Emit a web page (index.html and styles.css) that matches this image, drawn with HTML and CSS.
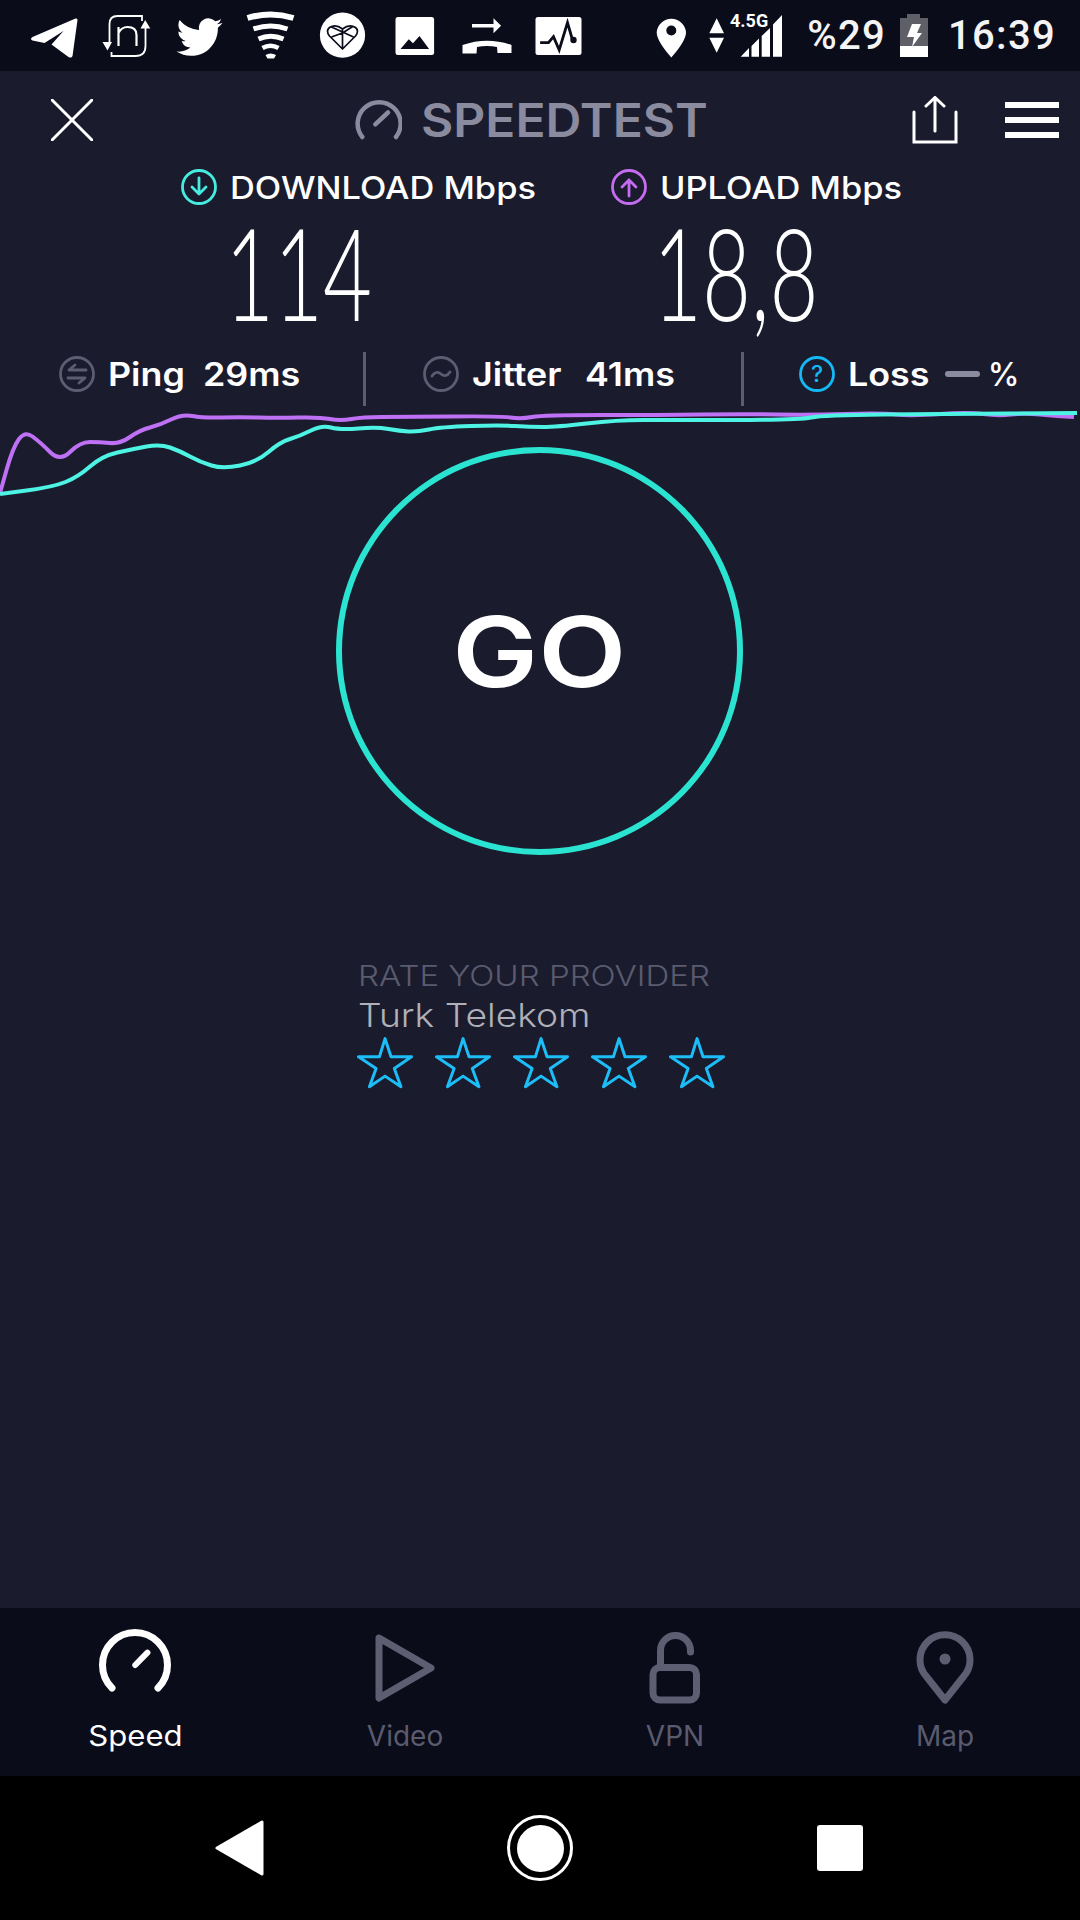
FILE: index.html
```html
<!DOCTYPE html>
<html lang="en">
<head>
<meta charset="utf-8">
<title>Speedtest</title>
<link rel="stylesheet" href="styles.css">
</head>
<body>
<div class="status">
  <div class="status-left">
    <svg class="slot" viewBox="17.5 0 72 71"><path fill="#fff" d="M75 18.6 32 37Q29 39 32 40.6L44 43 63 31 51 44.5 68 57Q71 58.5 72 56L77 20Q77 18 75 18.6Z"/></svg>
    <svg class="slot" viewBox="89.5 0 72 71"><g fill="none" stroke="#fff" stroke-width="1.8"><path d="M109 43V24Q109 16 117 16H141.5V21"/><path d="M145 28V46Q145 56 135 56H111V52"/><path stroke-width="2.2" d="M118 46V27M118 33Q121 27 127 27 136 27 136 35V46"/></g><path fill="#fff" d="M102 42H111.5L107 50.5ZM144.7 20 149.8 28.5H140Z"/></svg>
    <svg class="slot" viewBox="161.5 0 72 71"><path fill="#fff" transform="translate(176 14) scale(1.92)" d="M23.953 4.57a10 10 0 01-2.825.775 4.958 4.958 0 002.163-2.723c-.951.555-2.005.959-3.127 1.184a4.92 4.92 0 00-8.384 4.482C7.69 8.095 4.067 6.13 1.64 3.162a4.822 4.822 0 00-.666 2.475c0 1.71.87 3.213 2.188 4.096a4.904 4.904 0 01-2.228-.616v.06a4.923 4.923 0 003.946 4.827 4.996 4.996 0 01-2.212.085 4.936 4.936 0 004.604 3.417 9.867 9.867 0 01-6.102 2.105c-.39 0-.779-.023-1.17-.067a13.995 13.995 0 007.557 2.209c9.053 0 13.998-7.496 13.998-13.985 0-.21 0-.42-.015-.63A9.935 9.935 0 0024 4.59z"/></svg>
    <svg class="slot" viewBox="233.5 0 72 71"><g fill="none" stroke="#fff"><path stroke-width="6" d="M247 18Q270 11 293 18"/><path stroke-width="5" d="M253 29Q270 23 287 29"/><path stroke-width="5" d="M258 39Q270 33.5 283 39"/><path stroke-width="4.5" d="M262 48Q270 43.5 278 48"/></g><path fill="#fff" d="M265 55Q270 52 275.500 55L273.500 58.500H267Z"/></svg>
    <svg class="slot" viewBox="305.500 0 72 71"><circle cx="342" cy="35.200" r="22.600" fill="#fff"/><path fill="none" stroke="#0a0c1a" stroke-width="1.700" stroke-linejoin="round" d="M342 49 329 36Q325 31 329 27.500 335 23.500 342 29 349 23.500 355 27.500 359 31 355 36ZM331 27 353 37M342 29V49M331 37 342 33 353 26"/></svg>
    <svg class="slot" viewBox="377.500 0 72 71"><rect x="395" y="17" width="38.600" height="38" rx="2.500" fill="#fff"/><path fill="#0a0c1a" d="M400 49 408.300 39.300 412.500 43.300 419 36 428.600 49Z"/></svg>
    <svg class="slot" viewBox="449.500 0 72 71"><path fill="#fff" d="M471.500 24H493V18.300L500.600 25.700 493 33.300V27.500H471.500ZM462 45Q486.500 36.500 511 45V53H497L496.500 47Q486.500 45 476.500 47L476 53.500H462Z"/></svg>
    <svg class="slot" viewBox="521.500 0 72 71"><rect x="535" y="17" width="46" height="38" rx="2.500" fill="#fff"/><path fill="none" stroke="#0a0c1a" stroke-width="2.800" d="M539.600 42.700H548L553 36.700 558.700 50 567 22.700 572 40"/><circle cx="573" cy="40" r="3.200" fill="#0a0c1a"/></svg>
  </div>
  <div class="status-right">
    <svg class="sys-icons" viewBox="650 0 140 71"><path fill="#fff" fill-rule="evenodd" d="M671.300 57.500Q656.700 41 656.700 32.300A14.700 14.700 0 0 1 686 32.300Q686 41 671.300 57.500ZM671.300 35.500A5 5 0 1 0 671.300 25.500 5 5 0 0 0 671.300 35.500Z"/><path fill="#fff" d="M716.700 18.300 724 33.300H709.300ZM709.300 37.700H724L716.700 52.700ZM740.700 56.700H749V48ZM751.500 46V56.700H759V38.500ZM761.700 36V56.700H770V28ZM773 24.500V56.700H782V15Z"/><text class="net" x="730" y="27">4.5G</text></svg>
    <span class="pct">%29</span>
    <svg class="battery" viewBox="0 0 28 43"><path fill="#5f5f68" d="M7 0H20V4H28V32H0V4H7Z"/><path fill="#fff" d="M0 32H28V43H0ZM12 10H21L17 19H22L12 33 14 23H7Z"/></svg>
    <span class="clock">16:39</span>
  </div>
</div>

<main class="main">
  <div class="topbar">
    <svg class="close" viewBox="0 0 42 42"><path d="M1 1 41 41M41 1 1 41"/></svg>
    <svg class="gauge" viewBox="355 96 47 44"><path d="M362.300 135A21.500 21.500 0 1 1 396 135"/><path d="M375.300 122.300 388 110.500"/></svg>
    <span class="brand">SPEEDTEST</span>
    <svg class="share" viewBox="912 96 46 48"><path d="M914 112V142H956V112M935 131V98M926 106 935 97.500 944 106"/></svg>
    <div class="menu"><i></i><i></i><i></i></div>
  </div>

  <div class="labels">
    <div class="label">
      <svg class="ring ring-dl" viewBox="0 0 36 36"><circle cx="18" cy="18" r="16.500"/><path d="M18 9V25M11 18 18 25 25 18"/></svg>
      <span>DOWNLOAD Mbps</span>
    </div>
    <div class="label label-up">
      <svg class="ring ring-ul" viewBox="0 0 36 36"><circle cx="18" cy="18" r="16.500"/><path d="M18 27V11M11 18 18 11 25 18"/></svg>
      <span>UPLOAD Mbps</span>
    </div>
  </div>

  <div class="numbers">
    <span class="num">114</span>
    <span class="num">18,8</span>
  </div>

  <div class="metrics">
    <div class="metric metric-ping">
      <svg class="ring ring-grey" viewBox="0 0 36 36"><circle cx="18" cy="18" r="16.500"/><path d="M27 14H10L16 9M9 22H26L20 27"/></svg>
      <span class="word">Ping</span><span class="word val">29ms</span>
    </div>
    <i class="rule"></i>
    <div class="metric metric-jitter">
      <svg class="ring ring-grey" viewBox="0 0 36 36"><circle cx="18" cy="18" r="16.500"/><path d="M9 20Q13 14 18 18T27 16"/></svg>
      <span class="word">Jitter</span><span class="word val">41ms</span>
    </div>
    <i class="rule"></i>
    <div class="metric metric-loss">
      <svg class="ring ring-blue" viewBox="0 0 36 36"><circle cx="18" cy="18" r="16.500"/><text x="18" y="26" class="q">?</text></svg>
      <span class="word">Loss</span><i class="dash"></i><span class="pc">%</span>
    </div>
  </div>

  <svg class="graph" viewBox="0 406 1080 100">
    <path class="line-ul" d="M0 493L6.500 470Q13 447 19 439Q25 431 32.500 436.500Q40 442 50 452Q60 462 70 452Q80 442 90 442Q100 442 110 443Q120 444 130 437Q140 430 150 427.500Q160 425 171 419.500Q182 414 192.500 416Q203 418 221.500 417.500Q240 417 258.500 417.500Q277 418 298.500 417.500Q320 417 330 419Q340 421 351.500 419Q363 417 381 417Q400 417 450 416.500Q500 416 510.500 417.500Q521 419 532 417Q543 415 601 415Q660 415 701 414.500Q743 414 777 414.500Q812 415 846 414Q881 413 896 414.500Q912 416 940 414Q968 412 983 414Q998 416 1011 414.500Q1024 413 1040 414.500Q1057 416 1074 417"/>
    <path class="line-dl" d="M0 494L26.500 490.500Q53 487 65.500 482Q78 477 90 466.500Q102 456 117.500 452.500Q133 449 146.500 446.500Q160 444 170 447.500Q180 451 190 456.500Q200 462 211.500 465.500Q223 469 240 465.500Q257 462 268.500 452Q280 442 290 439Q300 436 311 430.500Q322 425 331 427.500Q340 430 358.500 428.500Q377 427 388.500 429Q400 431 408.500 431.500Q417 432 429 429.500Q441 427 470.500 426Q500 425 515 426Q530 427 543 427Q556 427 586.500 423.500Q617 420 643 420Q669 420 734 420Q799 420 811 417.500Q823 415 882.500 414.500Q942 414 1009 413.500L1077 413"/>
  </svg>

  <div class="go"><span>GO</span></div>

  <section class="rate">
    <div class="rate-title">RATE YOUR PROVIDER</div>
    <div class="rate-name">Turk Telekom</div>
    <div class="stars">
      <svg class="star" viewBox="-1.500 -1.500 56.300 52"><path d="M26.700 0 32.700 18.300H53.300L36 30 42.700 48.300 26.700 37.700 11 48.300 17.700 30 0 18.300H21Z"/></svg>
      <svg class="star" viewBox="-1.500 -1.500 56.300 52"><path d="M26.700 0 32.700 18.300H53.300L36 30 42.700 48.300 26.700 37.700 11 48.300 17.700 30 0 18.300H21Z"/></svg>
      <svg class="star" viewBox="-1.500 -1.500 56.300 52"><path d="M26.700 0 32.700 18.300H53.300L36 30 42.700 48.300 26.700 37.700 11 48.300 17.700 30 0 18.300H21Z"/></svg>
      <svg class="star" viewBox="-1.500 -1.500 56.300 52"><path d="M26.700 0 32.700 18.300H53.300L36 30 42.700 48.300 26.700 37.700 11 48.300 17.700 30 0 18.300H21Z"/></svg>
      <svg class="star" viewBox="-1.500 -1.500 56.300 52"><path d="M26.700 0 32.700 18.300H53.300L36 30 42.700 48.300 26.700 37.700 11 48.300 17.700 30 0 18.300H21Z"/></svg>
    </div>
  </section>
</main>

<nav class="tabs">
  <div class="tab tab-on">
    <svg class="tab-icon" viewBox="90 1624 90 80"><path d="M112 1688A32.500 32.500 0 1 1 158 1688"/><path stroke-width="6" d="M135.300 1665 147.400 1652.700"/></svg>
    <span>Speed</span>
  </div>
  <div class="tab">
    <svg class="tab-icon" viewBox="360 1624 90 80"><path d="M379 1638 431 1668 379 1698Z"/></svg>
    <span>Video</span>
  </div>
  <div class="tab">
    <svg class="tab-icon" viewBox="630 1624 90 80"><rect x="653" y="1667.500" width="43.500" height="32.500" rx="7"/><path d="M660.500 1667V1650.500A15 15 0 0 1 690.500 1650.500V1652"/></svg>
    <span>VPN</span>
  </div>
  <div class="tab">
    <svg class="tab-icon" viewBox="900 1624 90 80"><path d="M945 1700 926 1676A25 25 0 1 1 964 1676Z"/><circle class="dot" cx="945" cy="1659" r="5.500"/></svg>
    <span>Map</span>
  </div>
</nav>

<div class="sysnav">
  <div class="sys-cell"><svg class="back" viewBox="0 0 50 58"><path d="M47 3V55L2 29Z"/></svg></div>
  <div class="sys-cell"><div class="home"><i></i></div></div>
  <div class="sys-cell"><i class="recent"></i></div>
</div>
</body>
</html>
```

FILE: styles.css
```css
* { box-sizing: border-box; }
html, body { margin: 0; padding: 0; }
body {
  width: 1080px;
  height: 1920px;
  display: flex;
  flex-direction: column;
  background: #1a1c2e;
  color: #fff;
  font-family: Inter, "Liberation Sans", sans-serif;
  overflow: hidden;
}
svg { display: block; flex: none; }
i { display: block; }

/* status bar */
.status {
  height: 71px;
  flex: none;
  display: flex;
  justify-content: space-between;
  background: #0a0c1a;
  font-family: Roboto, sans-serif;
}
.status-left { display: flex; padding-left: 17.5px; }
.slot { width: 72px; height: 71px; }
.status-right { display: flex; align-items: center; padding-right: 24px; }
.sys-icons { width: 140px; height: 71px; margin-right: 17px; }
.net { font-size: 18px; font-weight: 700; fill: #fff; font-family: Roboto, sans-serif; }
.pct, .clock { font-size: 40px; font-weight: 500; line-height: 71px; color: #f4f4f4; letter-spacing: 1.300px; }
.battery { width: 28px; height: 43px; margin: 0 20px 0 14px; }

/* main */
.main { flex: 1; display: flex; flex-direction: column; min-height: 0; }
.topbar { height: 98px; flex: none; display: flex; align-items: center; padding: 0 21px 0 51px; }
.close { width: 42px; height: 42px; fill: none; stroke: #fff; stroke-width: 3; stroke-linecap: round; }
.gauge { width: 47px; height: 44px; margin-left: 262px; fill: none; stroke: #8a8b9e; stroke-width: 4.500; stroke-linecap: round; }
.brand { margin-left: 19px; font-size: 46px; font-weight: 600; line-height: 1; color: #8a8b9e; transform: scaleX(1.080); transform-origin: left center; }
.share { width: 46px; height: 48px; margin-left: auto; fill: none; stroke: #fff; stroke-width: 3; stroke-linecap: round; }
.menu { width: 54px; margin-left: 47px; display: flex; flex-direction: column; gap: 9px; }
.menu i { height: 6px; background: #fff; }

.labels { height: 34px; flex: none; display: flex; padding-left: 181px; margin-top: 1px; }
.label { display: flex; align-items: center; gap: 13px; font-size: 31px; font-weight: 500; line-height: 34px; }
.label span { padding-top: 2px; transform: scaleX(1.110); transform-origin: left center; }
.label-up { margin-left: 105px; }
.ring { width: 36px; height: 36px; fill: none; stroke-width: 2.800; stroke-linecap: round; stroke-linejoin: round; }
.ring-dl { stroke: #45ecdf; }
.ring-ul { stroke: #c56cf0; }
.ring-grey { stroke: #5c5d70; }
.ring-blue { stroke: #14b8f5; }
.q { fill: #14b8f5; stroke: none; font-size: 23px; font-weight: 500; text-anchor: middle; }

.numbers { height: 148px; flex: none; display: flex; padding-left: 225px; padding-bottom: 12px; align-items: center; }
.num {
  width: 440px;
  font-family: Lato, sans-serif;
  font-weight: 300;
  font-size: 128px;
  line-height: 136px;
  transform: scaleX(0.660);
  transform-origin: left center;
}

.metrics { height: 54px; flex: none; display: flex; align-items: center; font-size: 32px; font-weight: 600; }
.metric { display: flex; align-items: center; padding-bottom: 10px; }
.metric > svg { margin-right: 13px; }
.word { transform: scaleX(1.120); transform-origin: left center; }
.metric-ping { width: 363px; padding-left: 59px; }
.metric-ping .val { margin-left: 26px; }
.metric-jitter { width: 375px; padding-left: 57px; }
.metric-jitter .val { margin-left: 33px; }
.metric-loss { padding-left: 55px; }
.rule { width: 3px; height: 54px; background: #5c5d70; flex: none; }
.dash { width: 35px; height: 6px; border-radius: 3px; background: #8a8b9e; margin: 0 8px 0 24px; }
.pc { font-weight: 500; }

.graph { width: 1080px; height: 100px; flex: none; margin-bottom: -59px; }
.line-ul, .line-dl { fill: none; stroke-width: 4; stroke-linejoin: round; }
.line-ul { stroke: #bf71f5; }
.line-dl { stroke: #4df3e3; }

.go {
  width: 407px;
  height: 408px;
  flex: none;
  margin-left: 336px;
  border: 6px solid #2ae3d0;
  border-radius: 50%;
  display: flex;
  align-items: center;
  justify-content: center;
  font-size: 98px;
  font-weight: 600;
}
.go span { display: block; transform: scaleX(1.170); }

.rate { margin-top: 102px; padding-left: 358px; }
.rate-title { width: fit-content; font-size: 28px; font-weight: 300; line-height: 38px; color: #5a5b6e; transform: scaleX(1.180); transform-origin: left center; }
.rate-name { width: fit-content; font-size: 33px; font-weight: 300; line-height: 40px; color: #b0b0b8; transform: scaleX(1.127); transform-origin: left center; }
.stars { display: flex; gap: 22px; margin-top: 2px; margin-left: -1px; }
.star { width: 56px; height: 52px; fill: none; stroke: #1dbdf8; stroke-width: 3; stroke-linejoin: round; }

/* tabs */
.tabs { height: 168px; flex: none; display: grid; grid-template-columns: repeat(4, 270px); background: #0a0c1a; }
.tab { display: flex; flex-direction: column; align-items: center; padding-top: 16px; font-size: 28px; color: #5a5b6e; line-height: 40px; }
.tab > span { margin-top: 12px; }
.tab-icon { width: 90px; height: 80px; fill: none; stroke: #5d5e71; stroke-width: 7; stroke-linecap: round; stroke-linejoin: round; }
.tab-on { color: #fff; }
.tab-on > span { transform: scaleX(1.110); }
.tab-on .tab-icon { stroke: #fff; }
.dot { fill: #5d5e71; stroke: none; }

/* system nav */
.sysnav { height: 144px; flex: none; display: grid; grid-template-columns: repeat(3, 300px); padding-left: 90px; background: #000; }
.sys-cell { display: flex; align-items: center; justify-content: center; }
.back { width: 50px; height: 58px; fill: #fff; stroke: #fff; stroke-width: 3; stroke-linejoin: round; }
.home { width: 66px; height: 66px; border: 3px solid #fff; border-radius: 50%; display: flex; align-items: center; justify-content: center; }
.home i { width: 47px; height: 47px; background: #fff; border-radius: 50%; }
.recent { width: 46px; height: 46px; background: #fff; border-radius: 3px; }
```
